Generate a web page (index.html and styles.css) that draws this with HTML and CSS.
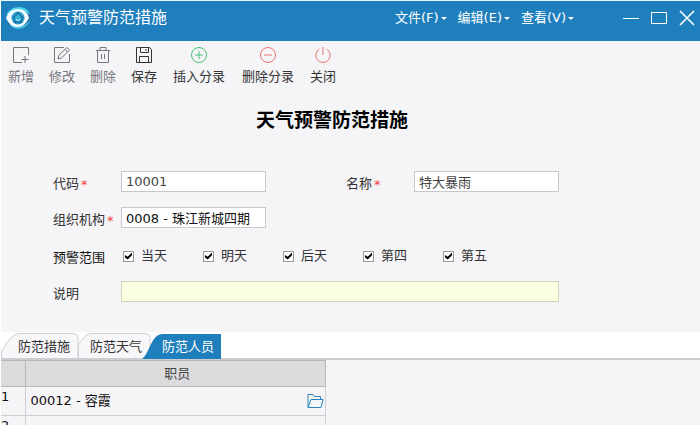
FILE: index.html
```html
<!DOCTYPE html>
<html lang="zh-CN">
<head>
    <meta charset="UTF-8">
    <meta name="viewport" content="width=device-width, initial-scale=1.0">
    <title>天气预警防范措施</title>
    <link rel="stylesheet" href="styles.css">
</head>
<body>
    <header class="titlebar">
        <svg class="logo" viewBox="0 0 26 24" aria-hidden="true">
            <ellipse cx="13" cy="12" rx="11.5" ry="11" fill="#1a5f94"/>
            <path d="M1 10C3 4 8 1 14 1c7 0 10 4 11 8-3-3-7-4-11-4C9 5 4 7 1 10z" fill="#49d3ea"/>
            <path d="M25 13c-1 6-6 10-12 10-5 0-8-3-9-6 3 3 7 3 10 3 5 0 9-3 11-7z" fill="#49bfe6"/>
            <path d="M1 12C3 6 8 3 13 3c6 0 10 4 11 9-3 6-7 9-12 9-5 0-9-4-11-9z" fill="#f4fdff"/>
            <circle cx="13" cy="12" r="6.5" fill="#2388c0"/>
            <circle cx="13" cy="12" r="5.5" fill="#36b5db"/>
            <path d="M8 12l5-5 5 5M9.500 12v4h7v-4" fill="none" stroke="#126b9e" stroke-width="1.300"/>
            <path d="M11 13c1 2 3 2 4 0" fill="none" stroke="#d8f8ff"/>
        </svg>
        <span class="app-name">天气预警防范措施</span>
        <nav class="menu">
            <button type="button">文件(F)</button>
            <button type="button">编辑(E)</button>
            <button type="button">查看(V)</button>
        </nav>
        <div class="window-buttons">
            <button type="button" aria-label="最小化"><svg viewBox="0 0 16 16"><path d="M0 8.500h16"/></svg></button>
            <button type="button" aria-label="最大化"><svg viewBox="0 0 16 16"><path d="M.5 2.500h15v11H.5z"/></svg></button>
            <button type="button" aria-label="关闭窗口"><svg viewBox="0 0 16 16"><path d="M1 1l14 14M15 1L1 15" stroke-width="1.600"/></svg></button>
        </div>
    </header>

    <div class="toolbar">
        <button type="button" class="muted">
            <svg viewBox="0 0 18 18"><path d="M16.500 9V1.500h-15v15H10M13 10v7M9.500 13.500h7"/></svg>新增
        </button>
        <button type="button" class="muted">
            <svg viewBox="0 0 18 18"><path d="M11 1.500H1.500v15h15V8M5 13l1-4 8-7.500 2.500 2.500-8 8zM12 3.500L14.500 6"/></svg>修改
        </button>
        <button type="button" class="muted">
            <svg viewBox="0 0 18 18"><path d="M2 4.500h14M6 4V1.500h6V4M3.500 4.500v12h11v-12M7.500 8v5M10.500 8v5"/></svg>删除
        </button>
        <button type="button">
            <svg viewBox="0 0 18 18"><path d="M3.500 1.500h11l2 2v13h-15v-15zM5.500 1.500v5h8v-5M11 3v2M4.500 16.500v-6h9v6"/></svg>保存
        </button>
        <button type="button" class="wide">
            <svg class="green" viewBox="0 0 18 18"><circle cx="9" cy="9" r="7.500"/><path d="M5 9h8M9 5v8"/></svg>插入分录
        </button>
        <button type="button" class="wide">
            <svg class="red" viewBox="0 0 18 18"><circle cx="9" cy="9" r="7.500"/><path d="M5 9h8"/></svg>删除分录
        </button>
        <button type="button">
            <svg class="red" viewBox="0 0 18 18"><path d="M9 1v8M5.500 3a7.200 7.200 0 1 0 7 0"/></svg>关闭
        </button>
    </div>

    <h1>天气预警防范措施</h1>

    <form class="form">
        <label for="code">代码<span class="req">*</span></label>
        <input class="text soft" type="text" id="code" value="10001">
        <label class="second" for="name">名称<span class="req">*</span></label>
        <input class="text soft" type="text" id="name" value="特大暴雨">

        <label class="org" for="org">组织机构<span class="req">*</span></label>
        <input class="text" type="text" id="org" value="0008 - 珠江新城四期">

        <span class="range-title" id="range">预警范围</span>
        <div class="options" role="group" aria-labelledby="range">
            <label><input type="checkbox" checked>当天</label>
            <label><input type="checkbox" checked>明天</label>
            <label><input type="checkbox" checked>后天</label>
            <label><input type="checkbox" checked>第四</label>
            <label><input type="checkbox" checked>第五</label>
        </div>

        <label for="note">说明</label>
        <input class="text note" type="text" id="note">
    </form>

    <div class="tabs" role="tablist">
        <button type="button" role="tab" aria-selected="false">
            <svg viewBox="0 0 80 26"><path d="M.5 26V19C6 12 9 1.500 20 1.500h53q4 0 4 4V26"/></svg><span>防范措施</span>
        </button>
        <button type="button" role="tab" aria-selected="false">
            <svg viewBox="0 0 80 26"><path d="M5.500 26V13C10 7 12 1.500 20 1.500h53q4 0 4 4V26"/></svg><span>防范天气</span>
        </button>
        <button type="button" role="tab" aria-selected="true">
            <svg viewBox="0 0 80 26"><path d="M-3 27C5 21 6 2 18 2h58v25z"/></svg><span>防范人员</span>
        </button>
    </div>

    <div class="grid">
        <table>
            <thead>
                <tr><th class="num"></th><th>职员</th></tr>
            </thead>
            <tbody>
                <tr>
                    <td class="num">1</td>
                    <td>
                        <div class="cell">
                            <span>00012 - 容霞</span>
                            <button type="button" aria-label="选择职员"><svg viewBox="0 0 17 16"><path d="M1 14.500v-13h5l1.500 2h6v3M1 14.500L4 6.500h12l-2 8z"/></svg></button>
                        </div>
                    </td>
                </tr>
                <tr><td class="num">2</td><td></td></tr>
            </tbody>
        </table>
    </div>
</body>
</html>
```
FILE: styles.css
```css
* {
    box-sizing: border-box;
}

body {
    margin: 0;
    height: 100vh;
    overflow: hidden;
    display: flex;
    flex-direction: column;
    border-left: 1px solid #fff;
    border-top: 1px solid #e4f8fd;
    background-color: #f5f4f7;
    color: #333;
    font-family: "DejaVu Sans", "Noto Sans CJK SC", sans-serif;
    font-size: 13px;
    line-height: 20px;
}

button {
    padding: 0;
    border: none;
    background: none;
    color: inherit;
    font: inherit;
    cursor: pointer;
}

svg {
    display: block;
    fill: none;
    stroke: currentColor;
    overflow: visible;
}

/* title bar */
.titlebar {
    display: flex;
    align-items: center;
    height: 40px;
    padding: 0 5px 6px 4px;
    background-color: #1f7fbd;
    color: #fff;
}

.logo {
    width: 26px;
    height: 24px;
    stroke: none;
}

.app-name {
    margin-left: 8px;
    font-size: 16px;
}

.menu {
    display: flex;
    gap: 11px;
    margin-left: auto;
}

.menu button {
    display: flex;
    align-items: center;
    gap: 2px;
}

.menu button::after {
    content: "";
    border: 3px solid transparent;
    border-top-color: #fff;
    border-bottom: none;
}

.window-buttons {
    display: flex;
    gap: 12px;
    margin-left: 49px;
}

.window-buttons svg {
    width: 16px;
    height: 16px;
}

/* toolbar */
.toolbar {
    display: flex;
    gap: 15px;
    padding: 5px 7px 0;
}

.toolbar button {
    display: flex;
    flex-direction: column;
    align-items: center;
    gap: 3px;
}

.toolbar svg {
    width: 18px;
    height: 18px;
}

.toolbar .muted {
    color: #77777c;
}

.toolbar .wide {
    margin: 0 1px;
}

.toolbar .green {
    color: #45c073;
}

.toolbar .red {
    color: #ee7474;
}

h1 {
    margin: 21px 37px 0 0;
    color: #000;
    font-size: 19px;
    line-height: 24px;
    text-align: center;
}

/* form */
.form {
    display: grid;
    grid-template-columns: 68px 145px 80px 68px 145px;
    grid-template-rows: 21px 21px 23px 21px;
    row-gap: 15px;
    padding: 39px 52px 0;
}

.form > label,
.range-title {
    padding-top: 3px;
    white-space: nowrap;
}

.form > .second {
    grid-column: 4;
}

.form > .org {
    grid-column: 1;
}

.req {
    margin-left: 2px;
    color: #f04040;
    vertical-align: -1px;
    line-height: 1;
}

.text {
    width: 100%;
    height: 21px;
    padding: 0 4px;
    border: 1px solid #c8c8cc;
    background-color: #fff;
    color: #111;
    font: inherit;
}

.text.soft {
    color: #444;
}

.text.note {
    grid-column: 2 / 6;
    background-color: #fbffdf;
    border-color: #d0d2c0;
}

.range-title {
    grid-column: 1;
    padding-top: 5px;
    color: #111;
}

.options {
    grid-column: 2 / 6;
    display: flex;
    gap: 36px;
    align-items: flex-end;
    padding-left: 2px;
}

.options label {
    display: flex;
    align-items: center;
    gap: 7px;
}

.options input {
    appearance: none;
    width: 11px;
    height: 11px;
    margin: 0;
    border: 1px solid #999;
    background: #fff;
    display: grid;
    place-items: center;
}

.options input:checked::before {
    content: "";
    width: 7px;
    height: 7px;
    background: #000;
    clip-path: polygon(0 35%, 38% 60%, 100% 0, 100% 38%, 38% 100%, 0 70%);
}

/* tabs */
.tabs {
    display: flex;
    height: 28px;
    margin-top: 30px;
    background-color: #fff;
    border-bottom: 2px solid #cecdd1;
}

.tabs button {
    position: relative;
    width: 72px;
    padding: 3px 0 0 17px;
    white-space: nowrap;
    text-align: left;
}

.tabs svg {
    position: absolute;
    left: 0;
    top: 0;
    width: 80px;
    height: 26px;
    fill: #f7f6f8;
    stroke: #d0d0d4;
}

.tabs span {
    position: relative;
}

.tabs [aria-selected="true"] {
    color: #fff;
}

.tabs [aria-selected="true"] svg {
    fill: #1f7fbd;
    stroke: none;
}

/* grid */
.grid {
    flex: 1;
    min-height: 0;
    overflow: hidden;
}

table {
    width: 325px;
    border-collapse: collapse;
    table-layout: fixed;
    color: #111;
}

th,
td {
    height: 29px;
    padding: 0 1px 0 5px;
    border: 1px solid #cfced2;
    border-left: none;
}

th {
    height: 26px;
    background-color: #dcdbdd;
    border-color: #b8b8bb;
    color: #444;
    font-weight: normal;
}

.num {
    width: 24px;
    padding: 0;
    vertical-align: top;
}

.cell {
    display: flex;
    align-items: center;
    justify-content: space-between;
}

.cell svg {
    width: 17px;
    height: 16px;
    color: #2b84bd;
}
```
